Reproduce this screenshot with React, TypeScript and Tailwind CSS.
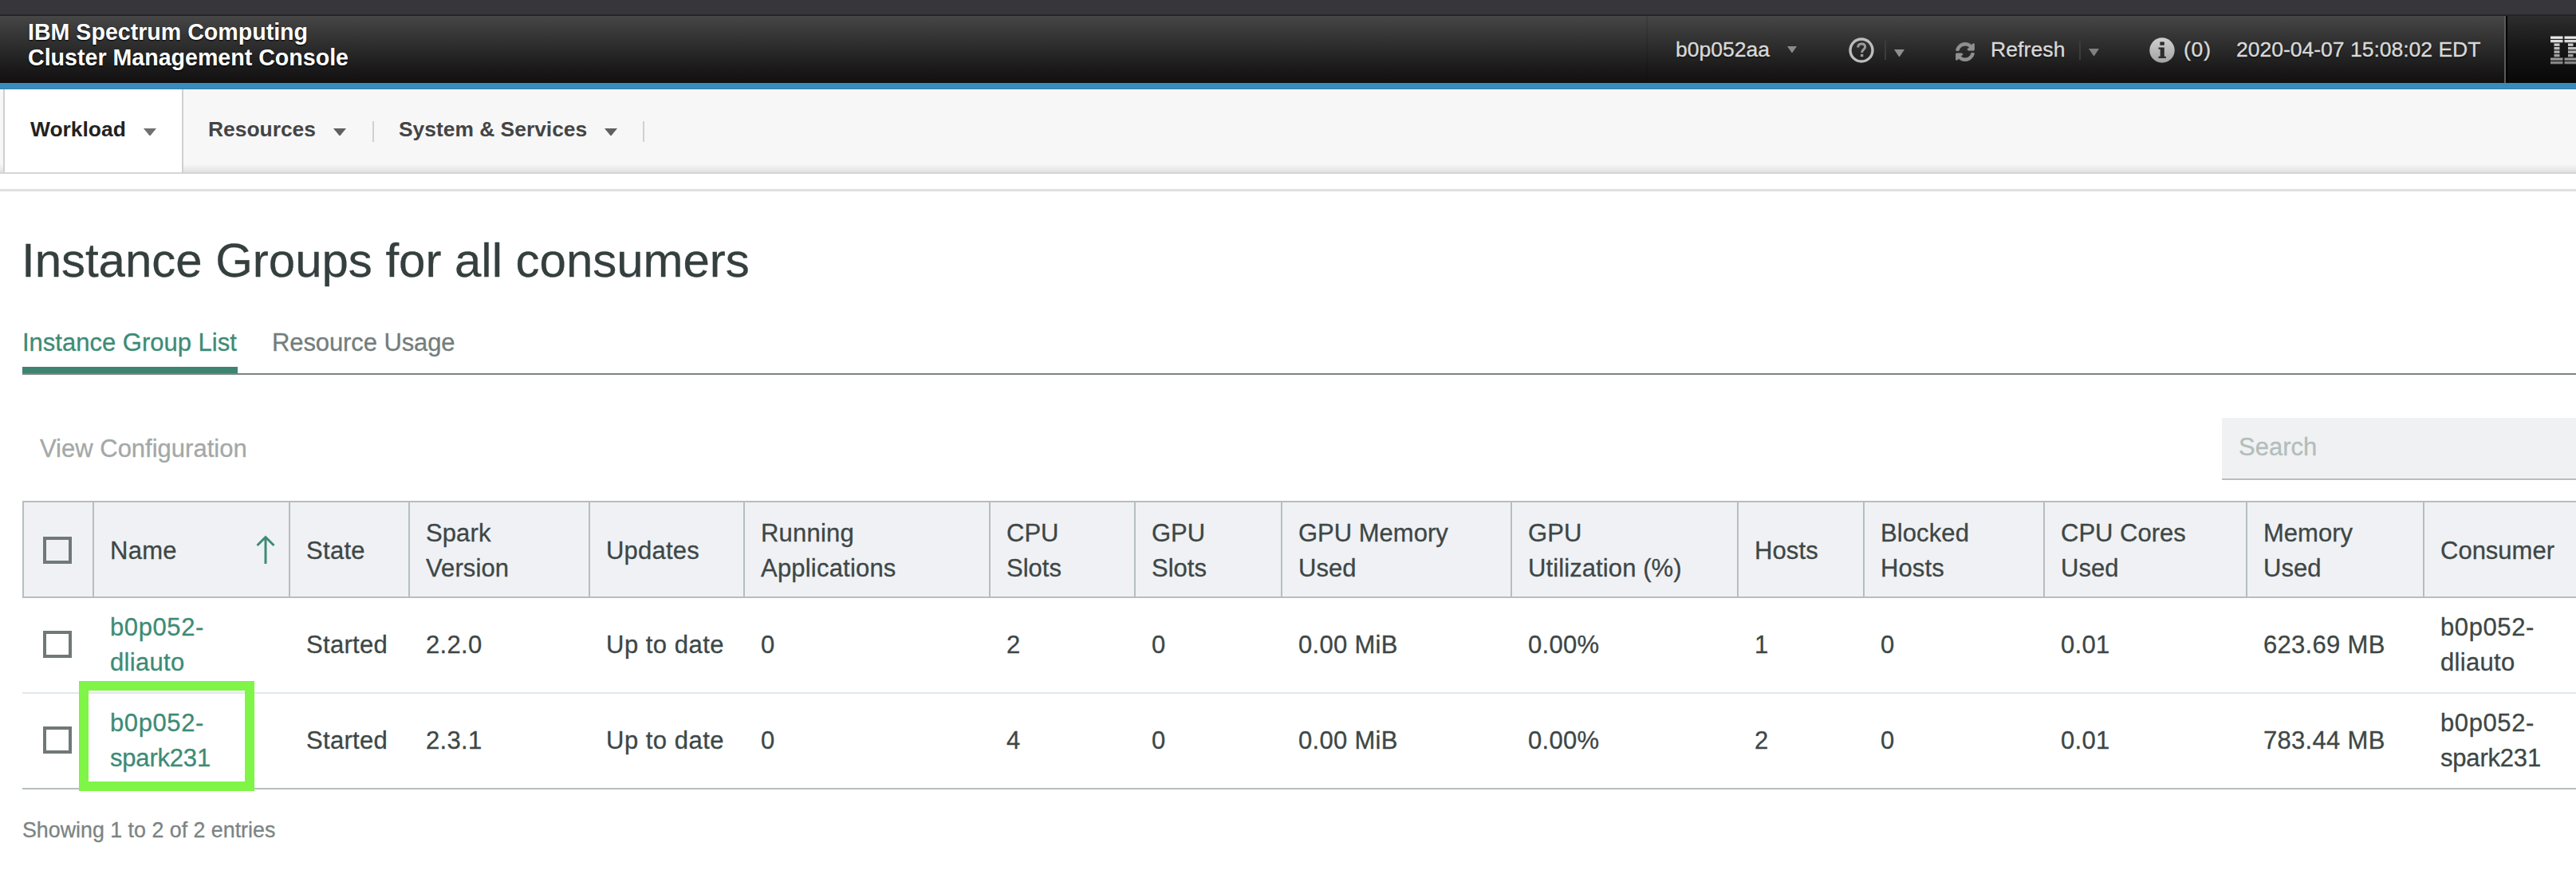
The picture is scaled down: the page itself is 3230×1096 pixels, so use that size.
import type { ReactNode } from 'react';
import { FaSyncAlt } from 'react-icons/fa';

function Caret({ className }: { className: string }) {
  return (
    <svg viewBox="0 0 16 9" preserveAspectRatio="none" fill="currentColor" className={className}>
      <path d="M0 0h16L8.6 9H7.4z" />
    </svg>
  );
}

function HelpIcon() {
  return (
    <svg viewBox="0 0 32 32" className="h-8 w-8 shrink-0">
      <circle cx="16" cy="16" r="14" fill="none" stroke="#bdbdbd" strokeWidth="3.4" />
      <path d="M11.7 12.6c0-3 1.900-4.600 4.500-4.600 2.700 0 4.400 1.500 4.400 3.900 0 3.300-4 3.400-4 7" fill="none" stroke="#9a9a9a" strokeWidth="3" />
      <rect x="14.900" y="20.800" width="3.400" height="3.400" fill="#9a9a9a" />
    </svg>
  );
}

function InfoIcon() {
  return (
    <svg viewBox="0 0 32 32" className="h-8 w-8 shrink-0">
      <defs>
        <linearGradient id="info" x1="0" y1="0" x2="0" y2="1">
          <stop offset="0" stopColor="#d0d0d0" />
          <stop offset="1" stopColor="#a3a3a3" />
        </linearGradient>
      </defs>
      <circle cx="16" cy="16" r="15.700" fill="url(#info)" />
      <path d="M13.400 5.500h5.400v4.200h-5.400zM11.500 12.500h7.300v11.200h2v2.300h-9.300v-2.300h2.200v-8.900h-2.200z" fill="#2c2c2c" />
    </svg>
  );
}

/* Striped logo, cut off by the right edge of the window. */
function IbmLogo() {
  return (
    <svg viewBox="0 0 32 36" className="h-9 w-8 shrink-0">
      <defs>
        <linearGradient id="ibm" gradientUnits="userSpaceOnUse" x1="0" y1="0" x2="0" y2="36">
          <stop offset="0" stopColor="#efefef" />
          <stop offset="1" stopColor="#7f7f7f" />
        </linearGradient>
      </defs>
      <g fill="url(#ibm)">
        {[0, 1, 6, 7].map((i) => (
          <g key={i}>
            <rect x="0" y={i * 4.5 + 0.5} width="15.500" height="3.300" />
            <rect x="17.500" y={i * 4.5 + 0.5} width="14.500" height="3.300" />
          </g>
        ))}
        {[2, 3, 4, 5].map((i) => (
          <g key={i}>
            <rect x="4.500" y={i * 4.5 + 0.5} width="7" height="3.300" />
            <rect x="22" y={i * 4.5 + 0.5} width={i === 3 || i === 4 ? 10 : 6.5} height="3.300" />
          </g>
        ))}
      </g>
    </svg>
  );
}

function TopBar() {
  return (
    <>
      <div className="h-5 border-b-2 border-[#252527] bg-[#37363b]" />
      <header className="flex h-[84px] bg-gradient-to-b from-[#464646] via-[#2a2a2a] to-[#110f10] text-[26.5px] text-[#d8d8d8] [text-shadow:0_1px_2px_#000]">
        <div className="w-[2064px] pt-1 pl-[35px] text-[28.6px] leading-8 font-bold text-white">
          <div>IBM Spectrum Computing</div>
          <div>Cluster Management Console</div>
        </div>
        <div className="w-0.5 bg-black/10" />
        <div className="flex flex-1 items-center pt-0.5 pl-[35px] [-webkit-text-stroke:0.4px]">
          <span className="w-[140px]">b0p052aa</span>
          <Caret className="mb-0.5 h-2 w-3 shrink-0 text-[#8a8a8a]" />
          <span className="w-[65px]" />
          <HelpIcon />
          <span className="ml-[13px] h-6 w-0.5 bg-[#3c3c3c]" />
          <Caret className="mt-1.5 ml-2.5 h-[9px] w-[13px] shrink-0 text-[#8f8f8f]" />
          <FaSyncAlt className="mt-1 ml-[64px] h-6 w-6 shrink-0 stroke-[#909090] stroke-[18px] text-[#909090]" />
          <span className="ml-5 w-[111px] tracking-[0.1px]">Refresh</span>
          <span className="h-6 w-0.5 bg-[#3c3c3c]" />
          <Caret className="mt-1 ml-2.5 h-[9px] w-[13px] shrink-0 text-[#808080]" />
          <span className="w-[63px]" />
          <InfoIcon />
          <span className="ml-[11px] w-[66px] tracking-[0.8px]">(0)</span>
          <span>2020-04-07 15:08:02 EDT</span>
        </div>
        <div className="w-0.5 bg-[#5a5a5a]" />
        <div className="flex w-[88px] items-center border-l-2 border-black bg-gradient-to-b from-[#2d2d2d] via-[#161616] to-[#080808] pt-0.5 pl-[54px]">
          <IbmLogo />
        </div>
      </header>
      <div className="h-2 border-b border-[#367da8] bg-[#388bbd]" />
    </>
  );
}

function NavBar() {
  return (
    <nav className="flex h-[106px] border-b-2 border-[#d5d5d5] bg-[linear-gradient(to_bottom,#f7f7f7_90%,#e2e2e2)] pl-1 text-[26.4px] font-bold text-[#444]">
      <div className="flex w-[226px] items-center border-x-2 border-[#d0d0d0] bg-white pb-[3px] pl-8 text-[#222]">
        <span className="w-[142px]">Workload</span>
        <Caret className="mt-1.5 h-[9px] w-4 shrink-0 text-[#707070]" />
      </div>
      <div className="flex items-center pb-[3px] pl-[31px]">
        <span className="w-[157px]">Resources</span>
        <Caret className="mt-1.5 h-[9px] w-4 shrink-0 text-[#606060]" />
        <span className="mt-1 ml-[33px] h-[26px] w-0.5 bg-[#d0d0d0]" />
        <span className="ml-[31px] w-[258px]">System &amp; Services</span>
        <Caret className="mt-1.5 h-[9px] w-4 shrink-0 text-[#606060]" />
        <span className="mt-1 ml-8 h-[26px] w-0.5 bg-[#d0d0d0]" />
      </div>
    </nav>
  );
}

const grid =
  'grid grid-cols-[88px_246px_150px_226px_194px_308px_182px_184px_288px_284px_158px_226px_254px_222px_192px]';

const headers: { lines: string[]; track: string }[] = [
  { lines: ['State'], track: 'tracking-[0.3px]' },
  { lines: ['Spark', 'Version'], track: 'tracking-[0.1px]' },
  { lines: ['Updates'], track: 'tracking-[0.2px]' },
  { lines: ['Running', 'Applications'], track: 'tracking-[0.2px]' },
  { lines: ['CPU', 'Slots'], track: 'tracking-[0px]' },
  { lines: ['GPU', 'Slots'], track: 'tracking-[0px]' },
  { lines: ['GPU Memory', 'Used'], track: 'tracking-[0px]' },
  { lines: ['GPU', 'Utilization (%)'], track: 'tracking-[0.1px]' },
  { lines: ['Hosts'], track: 'tracking-[0.1px]' },
  { lines: ['Blocked', 'Hosts'], track: 'tracking-[0.1px]' },
  { lines: ['CPU Cores', 'Used'], track: 'tracking-[0px]' },
  { lines: ['Memory', 'Used'], track: 'tracking-[0px]' },
  { lines: ['Consumer'], track: 'tracking-[0px]' },
];

const rows = [
  { name: ['b0p052-', 'dliauto'], cells: ['Started', '2.2.0', 'Up to date', '0', '2', '0', '0.00 MiB', '0.00%', '1', '0', '0.01', '623.69 MB'] },
  { name: ['b0p052-', 'spark231'], cells: ['Started', '2.3.1', 'Up to date', '0', '4', '0', '0.00 MiB', '0.00%', '2', '0', '0.01', '783.44 MB'] },
];

function Checkbox() {
  return <span className="mb-0.5 block h-[34px] w-9 border-4 border-[#6f7978]" />;
}

function Lines({ lines }: { lines: string[] }) {
  return (
    <div>
      {lines.map((l) => (
        <div key={l} className={l === 'b0p052-' ? 'tracking-[0.6px]' : l === 'spark231' ? 'tracking-[-0.2px]' : ''}>
          {l}
        </div>
      ))}
    </div>
  );
}

function Head({ children, className }: { children: ReactNode; className: string }) {
  return <div className={'flex items-center border-l-2 border-[#b5bfbd] pt-1 whitespace-nowrap ' + className}>{children}</div>;
}

function InstanceTable() {
  return (
    <div className="mt-[26px] text-[31px] leading-[44px] tracking-[0.3px] text-[#3d4746]">
      <div className={grid + ' h-[122px] border-y-2 border-[#b5bfbd] bg-[#f0f1f4]'}>
        <Head className="pl-6">
          <Checkbox />
        </Head>
        <Head className="pr-[17px] pl-5">
          <span className="flex-1">Name</span>
          <svg viewBox="0 0 24 36" className="mb-1 h-9 w-6 text-[#3d8b76]" fill="none" stroke="currentColor" strokeWidth="3">
            <path d="M12 36V2.500M1.500 13 12 2.500 22.500 13" />
          </svg>
        </Head>
        {headers.map((h) => (
          <Head key={h.lines.join(' ')} className={'pl-5 ' + h.track}>
            <Lines lines={h.lines} />
          </Head>
        ))}
      </div>
      {rows.map((row, i) => (
        <div
          key={row.name[1]}
          className={grid + ' h-[120px] items-center border-b-2 ' + (i === rows.length - 1 ? 'border-[#b5bfbd]' : 'border-[#e1e9ec]')}
        >
          <div className="pl-[26px]">
            <Checkbox />
          </div>
          <div className="relative pl-[22px] text-[#3d8b76]">
            <Lines lines={row.name} />
            {i === 1 && <span className="absolute -top-[31px] -left-[17px] h-[138px] w-[220px] border-12 border-[#7ff548]" />}
          </div>
          {row.cells.map((c, k) => (
            <div key={k} className={'pl-[22px] whitespace-nowrap ' + (k === 2 ? 'tracking-[0.5px]' : '')}>
              {c}
            </div>
          ))}
          <div className="pl-[22px]">
            <Lines lines={row.name} />
          </div>
        </div>
      ))}
    </div>
  );
}

export default function App() {
  return (
    <div className="h-[1096px] w-[3230px] overflow-hidden bg-white font-['Liberation_Sans',Arial,sans-serif]">
      <TopBar />
      <NavBar />
      <div className="h-[22px] border-b-3 border-[#e0e0e0]" />
      <main className="pt-[51px] pl-7 [-webkit-text-stroke:0.3px]">
        <h1 className="-ml-px text-[60px] leading-[72px] tracking-[-0.03px] text-[#343f3e]">Instance Groups for all consumers</h1>
        <div className="mt-[47px] flex border-b-2 border-[#7c8584] text-[31px] leading-10">
          <div className="w-[270px] border-b-8 border-[#3d8570] pb-2.5 whitespace-nowrap text-[#3d8b76]">Instance Group List</div>
          <div className="ml-[43px] tracking-[-0.1px] text-[#747d7c]">Resource Usage</div>
        </div>
        <div className="mt-[54px] flex items-center justify-between text-[31px]">
          <span className="pl-[22px] text-[#a3a8a7]">View Configuration</span>
          <div className="flex h-[78px] w-[444px] items-center border-b-2 border-[#b5bfbd] bg-[#f0f1f3] pb-0.5 pl-[21px] text-[#b3bdbb]">Search</div>
        </div>
        <InstanceTable />
        <div className="mt-[31px] text-[26.8px] leading-10 text-[#7c8483]">Showing 1 to 2 of 2 entries</div>
      </main>
    </div>
  );
}
